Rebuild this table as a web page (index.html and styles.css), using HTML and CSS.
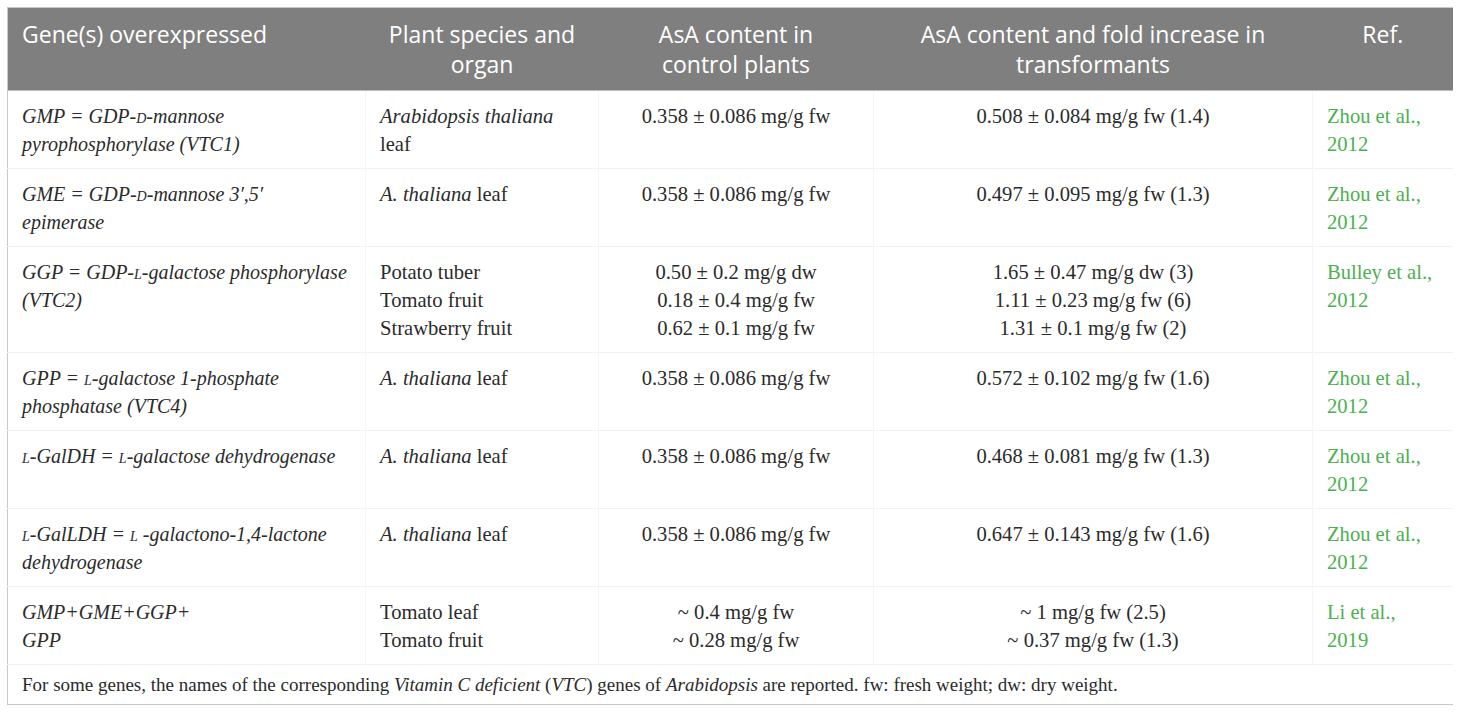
FILE: index.html
```html
<!doctype html>
<html lang="en">
<head>
    <meta charset="UTF-8">
    <title>AsA content in transformants</title>
    <link rel="stylesheet" href="styles.css">
</head>
<body>
    <table id="asa">
        <colgroup>
            <col class="c-gene">
            <col class="c-plant">
            <col class="c-control">
            <col class="c-trans">
            <col class="c-ref">
        </colgroup>
        <thead>
            <tr>
                <th class="left">Gene(s) overexpressed</th>
                <th>Plant species and<br>organ</th>
                <th>AsA content in<br>control plants</th>
                <th>AsA content and fold increase in<br>transformants</th>
                <th>Ref.</th>
            </tr>
        </thead>
        <tbody>
            <tr>
                <td class="gene">GMP = GDP-<span class="sc">d</span>-mannose<br>pyrophosphorylase (VTC1)</td>
                <td><i>Arabidopsis thaliana</i><br>leaf</td>
                <td class="mid">0.358 ± 0.086 mg/g fw</td>
                <td class="mid">0.508 ± 0.084 mg/g fw (1.4)</td>
                <td class="ref">Zhou et al.,<br>2012</td>
            </tr>
            <tr>
                <td class="gene">GME = GDP-<span class="sc">d</span>-mannose 3′,5′<br>epimerase</td>
                <td><i>A. thaliana</i> leaf</td>
                <td class="mid">0.358 ± 0.086 mg/g fw</td>
                <td class="mid">0.497 ± 0.095 mg/g fw (1.3)</td>
                <td class="ref">Zhou et al.,<br>2012</td>
            </tr>
            <tr>
                <td class="gene">GGP = GDP-<span class="sc">l</span>-galactose phosphorylase<br>(VTC2)</td>
                <td>Potato tuber<br>Tomato fruit<br>Strawberry fruit</td>
                <td class="mid">0.50 ± 0.2 mg/g dw<br>0.18 ± 0.4 mg/g fw<br>0.62 ± 0.1 mg/g fw</td>
                <td class="mid">1.65 ± 0.47 mg/g dw (3)<br>1.11 ± 0.23 mg/g fw (6)<br>1.31 ± 0.1 mg/g fw (2)</td>
                <td class="ref">Bulley et al.,<br>2012</td>
            </tr>
            <tr>
                <td class="gene">GPP = <span class="sc">l</span>-galactose 1-phosphate<br>phosphatase (VTC4)</td>
                <td><i>A. thaliana</i> leaf</td>
                <td class="mid">0.358 ± 0.086 mg/g fw</td>
                <td class="mid">0.572 ± 0.102 mg/g fw (1.6)</td>
                <td class="ref">Zhou et al.,<br>2012</td>
            </tr>
            <tr>
                <td class="gene"><span class="sc">l</span>-GalDH = <span class="sc">l</span>-galactose dehydrogenase</td>
                <td><i>A. thaliana</i> leaf</td>
                <td class="mid">0.358 ± 0.086 mg/g fw</td>
                <td class="mid">0.468 ± 0.081 mg/g fw (1.3)</td>
                <td class="ref">Zhou et al.,<br>2012</td>
            </tr>
            <tr>
                <td class="gene"><span class="sc">l</span>-GalLDH = <span class="sc">l</span> -galactono-1,4-lactone<br>dehydrogenase</td>
                <td><i>A. thaliana</i> leaf</td>
                <td class="mid">0.358 ± 0.086 mg/g fw</td>
                <td class="mid">0.647 ± 0.143 mg/g fw (1.6)</td>
                <td class="ref">Zhou et al.,<br>2012</td>
            </tr>
            <tr>
                <td class="gene">GMP+GME+GGP+<br>GPP</td>
                <td>Tomato leaf<br>Tomato fruit</td>
                <td class="mid">~ 0.4 mg/g fw<br>~ 0.28 mg/g fw</td>
                <td class="mid">~ 1 mg/g fw (2.5)<br>~ 0.37 mg/g fw (1.3)</td>
                <td class="ref">Li et al.,<br>2019</td>
            </tr>
        </tbody>
        <tfoot>
            <tr>
                <td colspan="5" class="note">For some genes, the names of the corresponding <i>Vitamin C deficient</i> (<i>VTC</i>) genes of <i>Arabidopsis</i> are reported. fw: fresh weight; dw: dry weight.</td>
            </tr>
        </tfoot>
    </table>
</body>
</html>
```

FILE: styles.css
```css
*{
    margin:0;
    padding:0;
}
body{
    margin: 7px;
    background: #ffffff;
    color: #2b2b2b;
    font-family: "Liberation Serif", "Times New Roman", serif;
}
#asa{
    width: 1446px;
    table-layout: fixed;
    border-collapse: collapse;
    border: 1px solid #c8c8c8;
}
.c-gene{ width: 358px; }
.c-plant{ width: 233px; }
.c-control{ width: 275px; }
.c-trans{ width: 439px; }
.c-ref{ width: 141px; }

#asa th{
    background: #7f7f7f;
    color: #ffffff;
    font-family: "Open Sans", "DejaVu Sans", sans-serif;
    font-weight: normal;
    font-size: 23px;
    line-height: 30px;
    padding: 11px 14px 11px;
    text-align: center;
    vertical-align: top;
    white-space: nowrap;
    border-bottom: 1px solid #bdbdbd;
}
#asa th.left{
    text-align: left;
}
#asa td{
    font-size: 20.6px;
    line-height: 28px;
    padding: 11px 14px 10px;
    vertical-align: top;
    white-space: nowrap;
    border-top: 1px solid #f2f2f2;
    border-left: 1px solid #f6f6f6;
}
#asa td.gene{
    font-size: 20px;
    font-style: italic;
    border-left: none;
}
.sc{
    font-variant: small-caps;
}
#asa td.mid{
    text-align: center;
}
#asa td.ref{
    color: #4cb04f;
}
#asa td.note{
    font-size: 19px;
    line-height: 26px;
    padding: 7px 14px 6px;
    border-left: none;
}
```
